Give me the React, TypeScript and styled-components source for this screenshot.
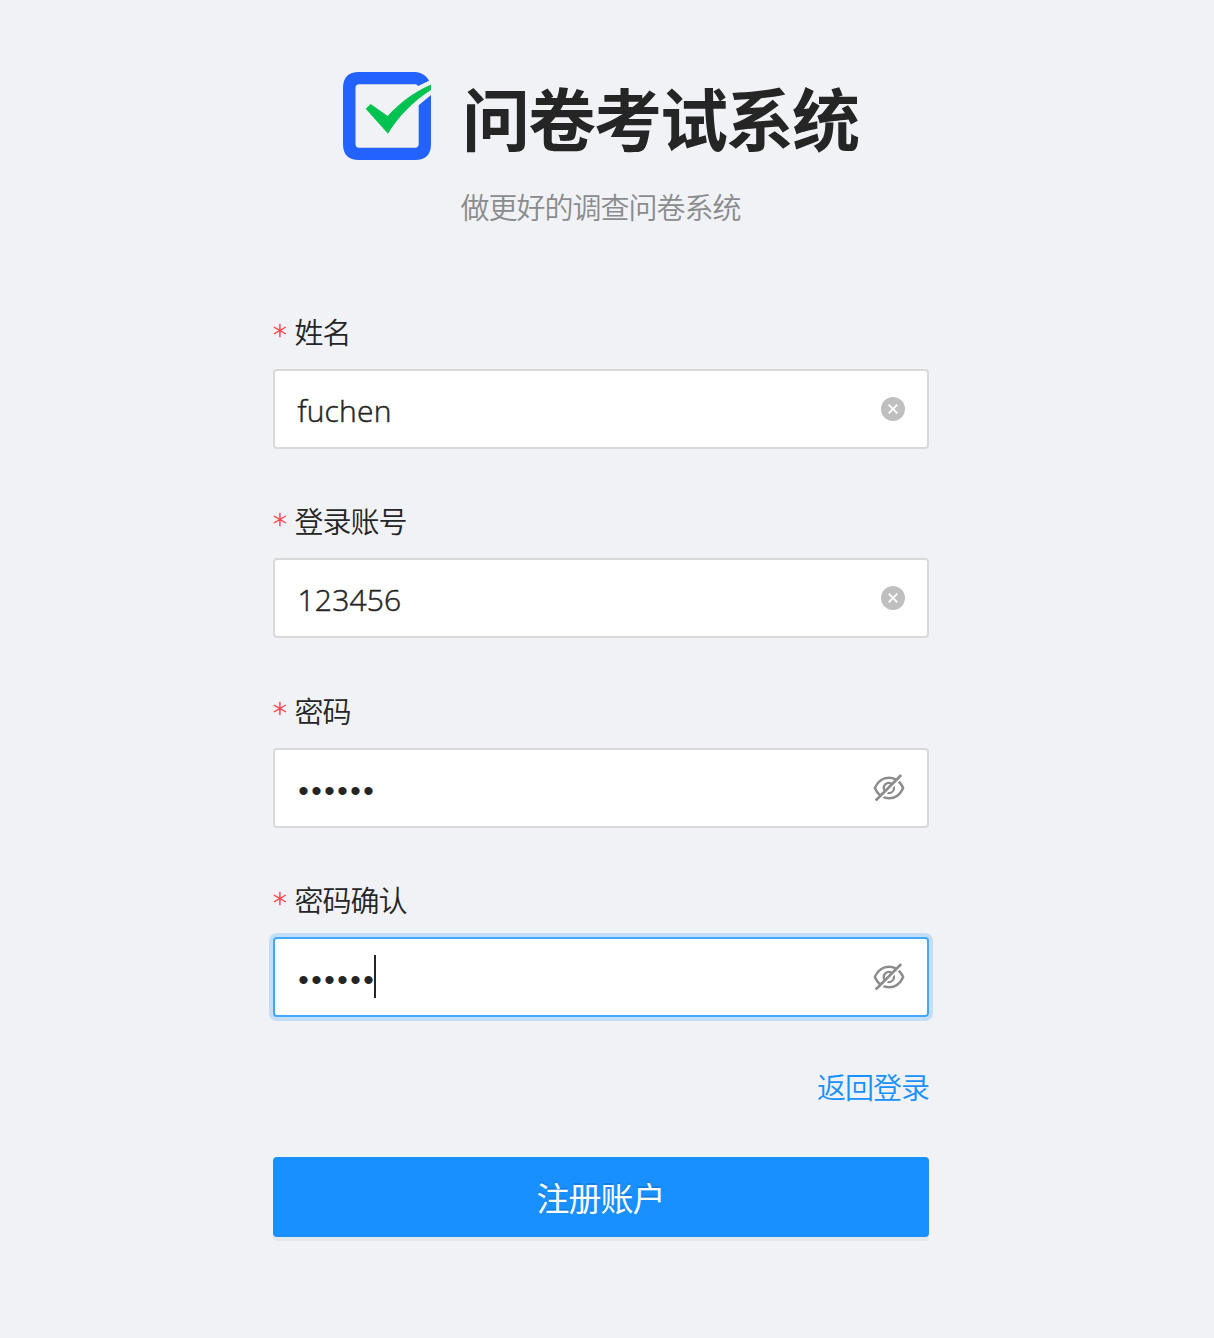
import React from 'react';
import styled, { createGlobalStyle } from 'styled-components';

const GlobalStyle = createGlobalStyle`
  * { box-sizing: border-box; }
  html, body { margin: 0; padding: 0; background: #f0f2f5; }
  body { font-family: "Noto Sans", "Noto Sans CJK SC", sans-serif; color: #252525; }
`;

const Page = styled.main`
  min-height: 1338px;
  padding: 72px 12px 0 0;
  display: flex;
  flex-direction: column;
  align-items: center;
  background: #f0f2f5;
`;

const Brand = styled.header`
  display: flex;
  align-items: center;
  gap: 31px;
  height: 88px;
`;

const Title = styled.h1`
  margin: 1px 0 0;
  padding-right: 1px;
  font: 700 68px/88px "Noto Sans CJK SC", sans-serif;
  letter-spacing: -2px;
  color: #252525;
  white-space: nowrap;
`;

const Slogan = styled.p`
  margin: 24px 0 0;
  padding-right: 1px;
  font: 350 29px/44px "Noto Sans CJK SC", sans-serif;
  letter-spacing: -1px;
  color: #8a8b8d;
`;

const Form = styled.form`
  width: 656px;
  margin-top: 72px;
  display: flex;
  flex-direction: column;
`;

const Field = styled.div`
  height: 189.4px;
`;

const Label = styled.label`
  display: flex;
  align-items: center;
  gap: 8px;
  height: 44px;
  margin: 9px 0 16px;
  font: 350 29px/42px "Noto Sans CJK SC", sans-serif;
  letter-spacing: -1px;
  color: #252525;
`;

const Required = styled.span`
  width: 13.5px;
  padding-top: 9px;
  font: 200 28px/44px "DejaVu Sans", sans-serif;
  color: #ff4d4f;
  -webkit-text-stroke: 0.6px #ff4d4f;
`;

const InputBox = styled.div<{ $focused?: boolean }>`
  display: flex;
  align-items: center;
  justify-content: space-between;
  height: 80px;
  padding: 0 20px 0 22px;
  border: 2px solid ${(p) => (p.$focused ? '#40a9ff' : '#d9d9d9')};
  border-radius: 4px;
  background: #fff;
  box-shadow: ${(p) => (p.$focused ? '0 0 0 4px rgba(24, 144, 255, 0.2)' : 'none')};
`;

const Value = styled.span`
  padding: 4px 0 0 0.5px;
  font: 300 30px/44px "Open Sans", "Noto Sans", sans-serif;
  letter-spacing: 0.2px;
  color: #252525;
  -webkit-text-stroke: 0.5px #252525;
`;

const Secret = styled.span`
  display: flex;
  align-items: center;
  height: 44px;
  padding-bottom: 1px;
  font: 400 30px/43px "Liberation Sans", sans-serif;
  color: #252525;
`;

const Bullet = styled.span`
  width: 13px;
  padding-top: 6px;
  text-align: center;
`;

const Caret = styled.span`
  width: 2px;
  height: 43px;
  margin-left: -1px;
  background: #252525;
`;

const Links = styled.div`
  display: flex;
  justify-content: flex-end;
  height: 44px;
  margin-top: 6.4px;
`;

const Link = styled.a`
  font: 350 29px/44px "Noto Sans CJK SC", sans-serif;
  letter-spacing: -1px;
  color: #1890ff;
`;

const Submit = styled.button`
  height: 80px;
  margin-top: 49px;
  padding: 0 1px 0 0;
  border: 0;
  border-radius: 4px;
  background: #1890ff;
  color: #fff;
  font: 400 33px/80px "Noto Sans CJK SC", sans-serif;
  letter-spacing: -1px;
  text-shadow: 0 -2px 0 rgba(0, 0, 0, 0.12);
  box-shadow: 0 4px 0 rgba(0, 0, 0, 0.043);
`;

const Logo = () => (
  <svg width="88" height="88" viewBox="0 0 88 88">
    <path
      fill="#2362ff"
      d="M16 0H72C78 0 83.500 3.500 86 8.700L75.300 14L73 12.300H16Q12.500 12.300 12.500 16V72Q12.500 75.700 16 75.700H72Q75.700 75.700 75.700 72V33.300L88 23V72Q88 88 72 88H16Q0 88 0 72V16Q0 0 16 0Z"
    />
    <path
      fill="#00c250"
      d="M22.700 36.700L27.700 32L44.700 44C57 30.500 71 20 88 12.500V18C70 29.500 55 45 45 61.700Z"
    />
  </svg>
);

const ClearIcon = () => (
  <svg width="28" height="28" viewBox="0 0 28 28">
    <circle cx="14" cy="14" r="12" fill="#bfbfbf" />
    <path d="M9.700 9.700L18.300 18.300M18.300 9.700L9.700 18.300" stroke="#fff" strokeWidth="1.900" />
  </svg>
);

const EyeInvisibleIcon = () => (
  <svg width="36" height="36" viewBox="0 0 1024 1024" fill="#8c8c8c">
    <path d="M942.2 486.2Q889.47 375.11 816.7 305l-50.88 50.88C807.31 395.53 843.45 447.4 874.7 512 791.5 684.2 673.4 766 512 766q-72.67 0-133.87-22.38L323 798.75Q408 838 512 838q288.3 0 430.2-300.3a60.29 60.29 0 0 0 0-51.5zm-63.57-320.64L836 122.88a8 8 0 0 0-11.32 0L715.31 232.2Q624.86 186 512 186q-288.3 0-430.2 300.3a60.3 60.3 0 0 0 0 51.5q56.69 119.4 136.5 191.41L112.48 835a8 8 0 0 0 0 11.31L155.17 889a8 8 0 0 0 11.31 0l712.15-712.12a8 8 0 0 0 0-11.32zM149.3 512C232.6 339.8 350.7 258 512 258c54.54 0 104.13 9.36 149.12 28.39l-70.3 70.3a176 176 0 0 0-238.13 238.13l-83.42 83.42C223.1 637.49 183.3 582.28 149.3 512zm246.7 0a112.11 112.11 0 0 1 146.2-106.69L401.31 546.2A112 112 0 0 1 396 512z" />
    <path d="M508 624c-3.46 0-6.87-.16-10.25-.47l-52.82 52.82a176.09 176.09 0 0 0 227.42-227.42l-52.82 52.82c.31 3.38.47 6.79.47 10.25a111.94 111.94 0 0 1-112 112z" />
  </svg>
);

type FieldProps = { label: string; value: string; secret?: boolean; focused?: boolean };

const FormField = ({ label, value, secret, focused }: FieldProps) => (
  <Field>
    <Label>
      <Required>*</Required>
      {label}
    </Label>
    <InputBox $focused={focused}>
      {secret ? (
        <Secret>
          {value.split('').map((_, i) => (
            <Bullet key={i}>•</Bullet>
          ))}
          {focused && <Caret />}
        </Secret>
      ) : (
        <Value>{value}</Value>
      )}
      {secret ? <EyeInvisibleIcon /> : <ClearIcon />}
    </InputBox>
  </Field>
);

export default function App() {
  return (
    <>
      <GlobalStyle />
      <Page>
        <Brand>
          <Logo />
          <Title>问卷考试系统</Title>
        </Brand>
        <Slogan>做更好的调查问卷系统</Slogan>
        <Form>
          <FormField label="姓名" value="fuchen" />
          <FormField label="登录账号" value="123456" />
          <FormField label="密码" value="123456" secret />
          <FormField label="密码确认" value="123456" secret focused />
          <Links>
            <Link>返回登录</Link>
          </Links>
          <Submit type="button">注册账户</Submit>
        </Form>
      </Page>
    </>
  );
}
